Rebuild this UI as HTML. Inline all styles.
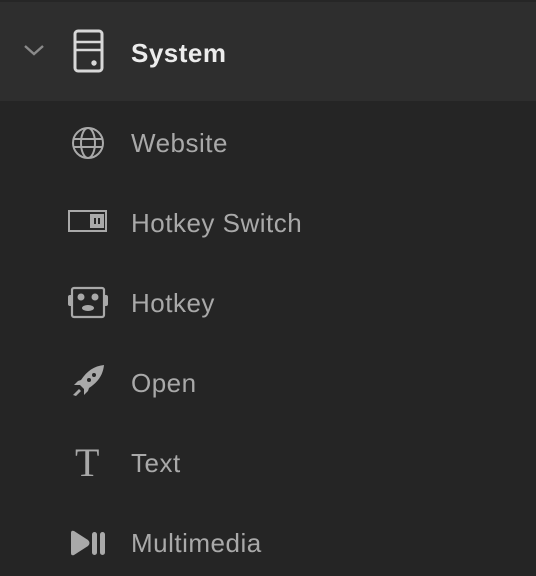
<!DOCTYPE html>
<html><head><style>
html,body{margin:0;padding:0;width:536px;height:576px;overflow:hidden;background:#252525;font-family:"Liberation Sans",sans-serif}
.hdr{position:absolute;left:0;top:0;width:536px;height:101px;background:#2e2e2e;border-top:2px solid #262626;box-sizing:border-box}
.t{position:absolute;left:131px;font-size:26px;letter-spacing:0.5px;color:#a9a9a9;line-height:30px}
.ic{position:absolute}
</style></head><body>
<div class="hdr"></div>
<svg class="ic" style="left:22px;top:40px" width="26" height="20"><path d="M3 6 L12 14 L21 6" fill="none" stroke="#8a8a8a" stroke-width="2.4"/></svg>
<svg class="ic" style="left:72px;top:28px" width="34" height="48"><rect x="3" y="3" width="27" height="40" rx="3" fill="none" stroke="#d8d8d8" stroke-width="3"/><line x1="3" y1="14" x2="30" y2="14" stroke="#d8d8d8" stroke-width="2.5"/><line x1="3" y1="22" x2="30" y2="22" stroke="#d8d8d8" stroke-width="2.5"/><circle cx="22" cy="35" r="2.7" fill="#d8d8d8"/></svg>
<div class="t" style="top:38px;color:#ececec;font-weight:bold">System</div>

<svg class="ic" style="left:71px;top:126px" width="34" height="34"><g fill="none" stroke="#a9a9a9" stroke-width="2"><circle cx="17" cy="17" r="15"/><ellipse cx="17" cy="17" rx="7" ry="15"/><line x1="2" y1="13" x2="32" y2="13"/><line x1="2" y1="21" x2="32" y2="21"/></g></svg>
<div class="t" style="top:128px">Website</div>

<svg class="ic" style="left:67px;top:209px" width="42" height="24"><rect x="2" y="2" width="37" height="20" fill="none" stroke="#a9a9a9" stroke-width="2"/><rect x="23" y="5" width="14" height="14" fill="#a9a9a9"/><rect x="27" y="9" width="2" height="6" fill="#252525"/><rect x="31" y="9" width="2" height="6" fill="#252525"/></svg>
<div class="t" style="top:208px">Hotkey Switch</div>

<svg class="ic" style="left:67px;top:286px" width="42" height="34"><rect x="5" y="2" width="32" height="29" rx="2" fill="none" stroke="#a9a9a9" stroke-width="2.2"/><rect x="1" y="9" width="5" height="11" rx="2" fill="#a9a9a9"/><rect x="36" y="9" width="5" height="11" rx="2" fill="#a9a9a9"/><circle cx="14" cy="11" r="3.5" fill="#a9a9a9"/><circle cx="28" cy="11" r="3.5" fill="#a9a9a9"/><ellipse cx="21" cy="22" rx="6" ry="3" fill="#a9a9a9"/></svg>
<div class="t" style="top:288px">Hotkey</div>

<svg class="ic" style="left:70px;top:363px" width="36" height="36"><path d="M34 2 C24 3 17 8 11 17 L8 18 L4 22 L10 22 L14 26 L14 32 L18 28 L19 25 C28 19 33 12 34 2 Z" fill="#a9a9a9"/><path d="M9 26 L3 32 L6 33 L11 28 Z" fill="#a9a9a9"/><circle cx="24" cy="12" r="2" fill="#252525"/><circle cx="19" cy="17" r="2" fill="#252525"/></svg>
<div class="t" style="top:368px">Open</div>

<div class="ic" style="left:75px;top:441px;font-family:'Liberation Serif',serif;font-size:40px;color:#a9a9a9;line-height:44px">T</div>
<div class="t" style="top:448px">Text</div>

<svg class="ic" style="left:68px;top:529px" width="40" height="28"><path d="M3 4 Q3 1 6 2 L20 11 Q23 14 20 17 L6 26 Q3 27 3 24 Z" fill="#a9a9a9"/><rect x="24" y="3" width="5" height="23" rx="2.5" fill="#a9a9a9"/><rect x="32" y="3" width="5" height="23" rx="2.5" fill="#a9a9a9"/></svg>
<div class="t" style="top:528px">Multimedia</div>
</body></html>
